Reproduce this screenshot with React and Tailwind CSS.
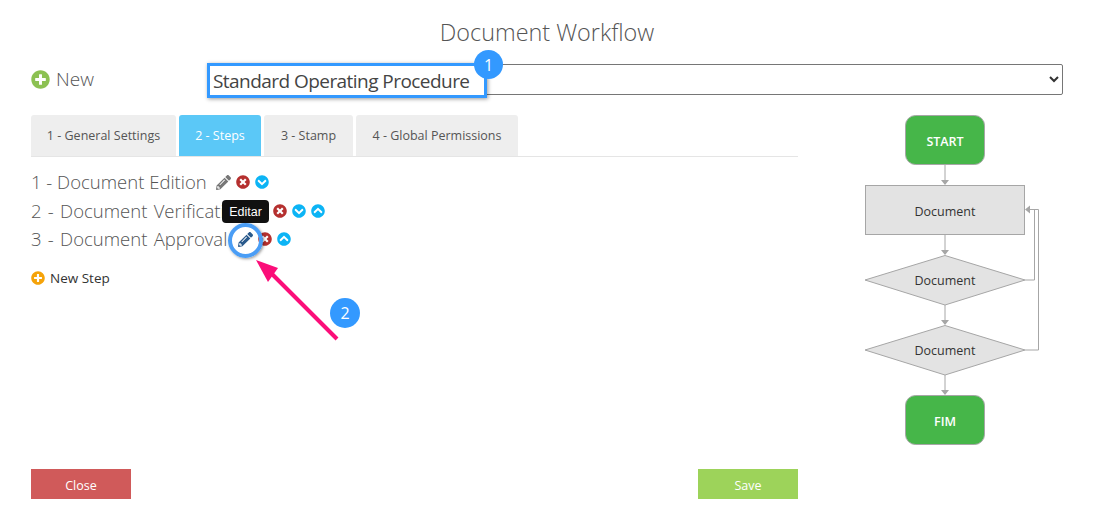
import React from 'react';
import { FaPencilAlt, FaTimesCircle, FaChevronCircleDown, FaChevronCircleUp, FaPlusCircle } from 'react-icons/fa';

const tabs = [
    { label: '1 - General Settings', width: 'w-[145px]' },
    { label: '2 - Steps', width: 'w-[82px]', active: true },
    { label: '3 - Stamp', width: 'w-[89px]' },
    { label: '4 - Global Permissions', width: 'w-[162px]' },
];

function Tab({ label, width, active }) {
    return (
        <div className={`${width} h-[41px] pt-[2px] flex items-center justify-center rounded-t-[3px] text-[12.5px] ${active ? 'bg-[#5bc8f7] text-white' : 'bg-[#eeeeee] text-[#555555]'}`}>
            {label}
        </div>
    );
}

function Step({ label, children, offset, spacing }) {
    return (
        <div className="flex items-center h-[28.5px]">
            <span className={`w-[185px] text-[18.5px] font-light text-[#555555] whitespace-nowrap ${spacing}`}>{label}</span>
            <div className={`flex items-center ${offset}`}>{children}</div>
        </div>
    );
}

function Flowchart() {
    const line = '#a6a6a6';
    const label = { fontFamily: '"Open Sans", sans-serif', fontSize: 12.5, textAnchor: 'middle' };
    return (
        <svg width="180" height="332" viewBox="0 0 180 332" className="shrink-0">
            <rect x="41.5" y="0.5" width="79" height="49" rx="10" fill="#46b649" stroke="#a6a6a6" />
            <text x="81" y="31" {...label} fill="#ffffff" fontWeight="600">START</text>
            <path d="M81 50V68M81 120V138M81 190V208M81 260V278" stroke={line} fill="none" />
            <path d="M77 65H85L81 70ZM77 135H85L81 140ZM77 205H85L81 210ZM77 275H85L81 280Z" fill={line} />
            <rect x="1.5" y="70.5" width="159" height="49" fill="#e3e3e3" stroke="#a6a6a6" />
            <text x="81" y="101" {...label} fill="#333333">Document</text>
            <path d="M81 140.5L161 165L81 190L1 165Z" fill="#e3e3e3" stroke="#a6a6a6" />
            <text x="81" y="170" {...label} fill="#333333">Document</text>
            <path d="M81 210.5L161 235L81 260L1 235Z" fill="#e3e3e3" stroke="#a6a6a6" />
            <text x="81" y="240" {...label} fill="#333333">Document</text>
            <path d="M161 165H170.5V94.5H165M161 235H174.5V94.5H170" stroke={line} fill="none" />
            <path d="M161 94.5L166 90.5V98.5Z" fill={line} />
            <rect x="41.5" y="280.5" width="79" height="49" rx="10" fill="#46b649" stroke="#a6a6a6" />
            <text x="81" y="311" {...label} fill="#ffffff" fontWeight="600">FIM</text>
        </svg>
    );
}

export default function App() {
    return (
        <div className="relative w-[1094px] h-[513px] bg-white overflow-hidden font-['Open_Sans',sans-serif] px-[31px]">
            <h1 className="pt-[15px] h-[64px] text-center text-[23.4px] font-light text-[#555555]">Document Workflow</h1>

            <div className="flex items-center h-[31px]">
                <div className="w-[178px] flex items-center gap-[6px]">
                    <FaPlusCircle size={19} className="text-[#8cc152]" />
                    <span className="text-[19px] font-light text-[#555555]">New</span>
                </div>
                <select className="flex-1 h-[31px] border border-[#767676] rounded-[2px] text-[18px] text-[#333333] bg-white">
                    <option></option>
                </select>
            </div>

            <div className="flex mt-[20px]">
                <div className="w-[767px] h-[384px] flex flex-col">
                    <div className="flex gap-[3px] border-b border-[#e5e5e5] h-[42px]">
                        {tabs.map((t) => <Tab key={t.label} {...t} />)}
                    </div>

                    <div className="mt-[11px]">
                        <Step label="1 - Document Edition" offset="">
                            <FaPencilAlt size={15} className="text-[#777777]" />
                            <FaTimesCircle size={14} className="text-[#b5302f] ml-[5px]" />
                            <FaChevronCircleDown size={14} className="text-[#0cb4f5] ml-[5px]" />
                        </Step>
                        <Step label="2 - Document Verification" offset="ml-[35px]" spacing="[word-spacing:1.5px]">
                            <FaPencilAlt size={15} className="text-[#777777]" />
                            <FaTimesCircle size={14} className="text-[#b5302f] ml-[7px]" />
                            <FaChevronCircleDown size={14} className="text-[#0cb4f5] ml-[5px]" />
                            <FaChevronCircleUp size={14} className="text-[#0cb4f5] ml-[5px]" />
                        </Step>
                        <Step label="3 - Document Approval" offset="ml-[22px]" spacing="[word-spacing:1.5px]">
                            <FaPencilAlt size={15} className="text-[#2a5a8c]" />
                            <FaTimesCircle size={14} className="text-[#b5302f] ml-[5px]" />
                            <FaChevronCircleUp size={14} className="text-[#0cb4f5] ml-[5px]" />
                        </Step>
                    </div>

                    <div className="flex items-center gap-[5px] mt-[14px] text-[13.5px] text-[#333333]">
                        <FaPlusCircle size={14} className="text-[#f5a30a]" />
                        <span>New Step</span>
                    </div>

                    <div className="mt-auto flex justify-between text-[12.5px] text-white">
                        <button className="w-[100px] h-[30px] pt-[5px] bg-[#d05a5a]">Close</button>
                        <button className="w-[100px] h-[30px] pt-[5px] bg-[#9dd35a]">Save</button>
                    </div>
                </div>
                <div className="ml-[66px]">
                    <Flowchart />
                </div>
            </div>

            {/* annotations drawn over the page */}
            <div className="absolute left-[207px] top-[63px] w-[280px] h-[35px] flex items-center pl-[3px] pt-[1px] bg-white border-[3px] border-[#3399ff] shadow-[1px_1px_4px_rgba(0,0,0,0.4)] text-[19px] tracking-[-0.55px] whitespace-nowrap text-[#444444]">
                Standard Operating Procedure
            </div>
            <div className="absolute left-[474px] top-[50px] w-[29px] h-[29px] rounded-full bg-[#3399ff] text-white text-[16px] flex items-center justify-center">1</div>

            <div className="absolute left-[222px] top-[200px] w-[47px] h-[23px] pt-[1px] rounded-[4px] bg-[#111111] text-white text-[12.5px] font-medium font-['Liberation_Sans',sans-serif] flex items-center justify-center">Editar</div>
            <div className="absolute left-[228px] top-[223px] w-[35px] h-[35px] rounded-full border-[4px] border-[#4a9df5] shadow-[1px_1px_3px_rgba(0,0,0,0.4)]" />

            <svg className="absolute left-[250px] top-[255px]" width="95" height="90" viewBox="0 0 95 90">
                <path d="M87 84L22 19" stroke="#fb0e79" strokeWidth="4" fill="none" />
                <path d="M6 5L28 13L18 27Z" fill="#fb0e79" />
            </svg>
            <div className="absolute left-[330px] top-[298px] w-[30px] h-[30px] rounded-full bg-[#3399ff] text-white text-[16px] flex items-center justify-center">2</div>
        </div>
    );
}
